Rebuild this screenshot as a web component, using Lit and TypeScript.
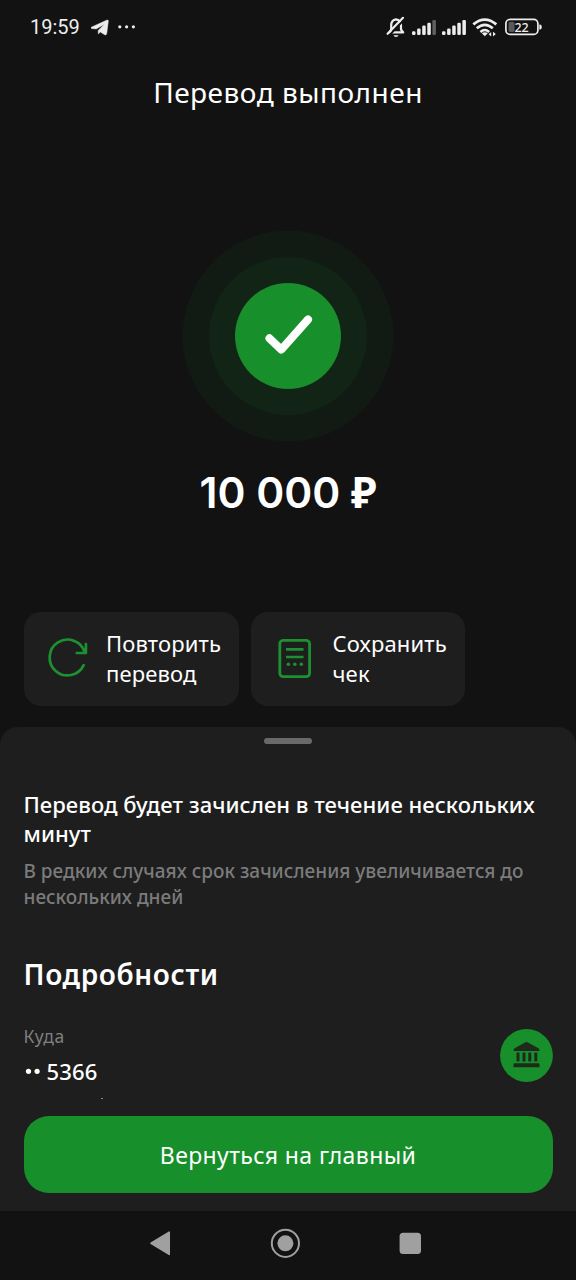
import { LitElement, html, css, svg } from "lit";
import { customElement } from "lit/decorators.js";

@customElement("status-bar")
class StatusBar extends LitElement {
  static styles = css`
    :host { display: flex; justify-content: space-between; height: 54px; padding: 0 33px 0 30px; box-sizing: border-box; align-items: center; color: #ededed; }
    .side { display: flex; align-items: center; height: 54px; }
    .time { font: 400 20px/55px Roboto, sans-serif; letter-spacing: 0; width: 61px; white-space: nowrap; }
    svg { display: block; }
  `;
  render() {
    const bars = (x: number, dim: boolean) =>
      [0, 1, 2, 3, 4].map(
        (i) => svg`<rect x=${x + i * 5.1} y=${31.2 - i * 2.8} width="3.5" height=${3.8 + i * 2.8} rx="1.2" fill=${dim && i === 4 ? "#606060" : "#ededed"}/>`
      );
    return html`
      <div class="side">
        <span class="time">19:59</span>
        <svg width="46" height="54" viewBox="91 0 46 54" fill="#ededed">
          <path d="M91.3 27.2 106.6 20.2Q108.7 19.5 108.3 21.4L106.7 33.8Q106.3 35.4 104.7 34.7L100.3 32 98.3 33.9 98.2 30.5 104.3 24.3 96.2 28.9 91.6 28.6Q90 28 91.3 27.2Z" stroke="#ededed" stroke-width=".5"/>
          <circle cx="119.8" cy="26.8" r="1.6"/><circle cx="126.6" cy="26.8" r="1.6"/><circle cx="133.4" cy="26.8" r="1.6"/>
        </svg>
      </div>
      <svg width="157" height="54" viewBox="386 0 157 54" fill="none" stroke="#ededed">
        <path d="M389.6 32.4H403.2L401 29.5V25.5Q401 20 396 19.3 391.2 20 391.2 25.5V29.4Z" stroke-width="2.2" stroke-linejoin="round"/>
        <path d="M393.5 35.2H398.5Q398 36.9 396 36.9 394 36.9 393.5 35.2Z" fill="#ededed" stroke="none"/>
        <path d="M390 34.6 404.6 19" stroke="#111" stroke-width="2"/>
        <path d="M387.6 33.8 403 17.8" stroke-width="2.2" stroke-linecap="round"/>
        <g stroke="none">${bars(412, true)}${bars(442, false)}</g>
        <g stroke-width="2.8">
          <path d="M473.3 24.4Q484.8 14.8 496.3 24.4"/>
          <path d="M476.8 28.3Q484.8 21.5 492.8 28.3"/>
          <path d="M480.4 32Q484.8 28 489.2 32" stroke-width="2.4"/>
        </g>
        <path d="M481.8 33.3Q484.8 31.4 487.8 33.3L484.8 36.3Z" fill="#ededed" stroke="none"/>
        <path d="M488.6 34.3 491.2 32V36.4ZM495.8 34 493 36.4V31.8Z" fill="#ededed" stroke="none"/>
        <rect x="505.9" y="19.4" width="32" height="15" rx="4.2" stroke-width="1.7"/>
        <rect x="508.5" y="21.8" width="6" height="10.2" rx="1.8" fill="#5a5a5a" stroke="none"/>
        <path d="M539.3 24.5H540.3Q541.8 25 541.8 27T540.3 29.5H539.3Z" fill="#ededed" stroke="none"/>
        <text x="521.6" y="31.6" text-anchor="middle" fill="#ededed" stroke="none" font-family="Noto Sans, sans-serif" font-size="12.5" font-weight="500">22</text>
      </svg>
    `;
  }
}

@customElement("action-card")
class ActionCard extends LitElement {
  static styles = css`
    :host { display: flex; align-items: center; height: 93.5px; box-sizing: border-box; border-radius: 17px; background: #1e1e1e; }
    ::slotted(svg) { display: block; flex: none; }
    .label { font: 400 22px/29.4px "Noto Sans", sans-serif; letter-spacing: 0.15px; color: #fff; white-space: nowrap; margin-left: -0.5px; }
  `;
  render() {
    return html`<slot name="icon"></slot><div class="label"><slot></slot></div>`;
  }
}

@customElement("app-root")
class AppRoot extends LitElement {
  static styles = css`
    :host { display: flex; flex-direction: column; width: 576px; height: 1280px; background: #121212; color: #fff; font-family: "Noto Sans", sans-serif; overflow: hidden; }
    svg { display: block; flex: none; }
    .title { font: 400 28px/76px "Noto Sans", sans-serif; height: 74px; text-align: center; letter-spacing: 0.5px; }
    .hero { display: flex; flex-direction: column; align-items: center; height: 484px; box-sizing: border-box; padding-top: 102px; }
    .amount { font: 600 42.5px/50px Inter, sans-serif; margin-top: 25px; white-space: nowrap; }
    .ruble { font: 700 42.5px/50px "Noto Sans", sans-serif; }
    .cards { display: flex; gap: 12px; padding-left: 23.5px; height: 114.5px; }
    .repeat { width: 215.5px; }
    .save { width: 214px; }
    .sheet { flex: none; height: 484.5px; background: #1e1e1e; border-radius: 18px 18px 0 0; display: flex; flex-direction: column; padding: 11.5px 23.5px 18px; box-sizing: border-box; }
    .handle { width: 48px; height: 6px; border-radius: 3px; background: #6a6a6a; align-self: center; }
    .lead { font-size: 22px; font-weight: 500; line-height: 29.5px; letter-spacing: 0.05px; margin-top: 46px; white-space: nowrap; }
    .note { font-size: 19px; font-weight: 500; line-height: 26px; margin-top: 9px; color: #7b7b7b; white-space: nowrap; }
    .heading { font-size: 28px; font-weight: 600; line-height: 38px; letter-spacing: 0.6px; margin-top: 45.5px; white-space: nowrap; }
    .row { display: flex; justify-content: space-between; margin-top: 36px; height: 87px; }
    .dest { display: flex; flex-direction: column; }
    .cap { font-size: 17.5px; line-height: 24px; letter-spacing: 0.5px; color: #7f7f7f; margin-top: -5px; }
    .account { display: flex; align-items: center; font-size: 22px; font-weight: 500; line-height: 30px; letter-spacing: 0.2px; margin-top: 8px; }
    .speck { width: 2px; height: 1px; background: #8a8a8a; margin: 11.5px 0 0 77.5px; }
    .main { flex: none; height: 77px; border-radius: 25px; background: #17902b; text-align: center; font-size: 23px; font-weight: 400; line-height: 78px; letter-spacing: 0.4px; white-space: nowrap; }
    .nav { flex: 1; display: flex; background: #121212; }
  `;
  render() {
    return html`
      <status-bar></status-bar>
      <div class="title">Перевод выполнен</div>
      <div class="hero">
        <svg width="212" height="212" viewBox="-106 -106 212 212">
          <circle r="105.5" fill="#121a14"/><circle r="79" fill="#122416"/><circle r="53" fill="#17902b"/>
          <path d="M-18.5 2.3-6.7 13.6 20-16.5" fill="none" stroke="#fff" stroke-width="8" stroke-linecap="round" stroke-linejoin="round"/>
        </svg>
        <div class="amount">10 000 <span class="ruble">₽</span></div>
      </div>
      <div class="cards">
        <action-card class="repeat">
          <svg slot="icon" width="83" height="94" viewBox="23.5 611 83 94" fill="none" stroke="#1c9130" stroke-width="2.7" stroke-linecap="round" stroke-linejoin="round">
            <path d="M83.2 664.2A17.9 17.9 0 1 1 84.2 651.4M85.4 643.1V652H76.3"/>
          </svg>
          Повторить<br>перевод
        </action-card>
        <action-card class="save">
          <svg slot="icon" width="82" height="94" viewBox="251 612 82 94" fill="none" stroke="#1c9130" stroke-width="2.8">
            <rect x="279.8" y="640.3" width="29.8" height="36.4" rx="3.5"/>
            <path d="M286 649.4H303.5M286 657H303.5" stroke-width="2.6"/>
            <g fill="#1c9130" stroke="none"><circle cx="288.4" cy="664.3" r="1.8"/><circle cx="294.8" cy="664.3" r="1.8"/><circle cx="301.3" cy="664.3" r="1.8"/></g>
          </svg>
          Сохранить<br>чек
        </action-card>
      </div>
      <div class="sheet">
        <div class="handle"></div>
        <div class="lead">Перевод будет зачислен в течение нескольких<br>минут</div>
        <div class="note">В редких случаях срок зачисления увеличивается до<br>нескольких дней</div>
        <div class="heading">Подробности</div>
        <div class="row">
          <div class="dest">
            <div class="cap">Куда</div>
            <div class="account">
              <svg width="23" height="30" viewBox="23.5 1057 23 30" fill="#fff"><circle cx="28" cy="1072.3" r="2.6"/><circle cx="36.6" cy="1072.3" r="2.6"/></svg>
              <span>5366</span>
            </div>
            <div class="speck"></div>
          </div>
          <svg width="53" height="53" viewBox="499.5 1029 53 53" fill="#1e2a1c">
            <circle cx="526" cy="1055.5" r="26.4" fill="#17902b"/>
            <path d="M526 1041.8 538 1048.2Q539 1048.8 539 1051H513Q513 1048.8 514 1048.2ZM516 1052.6H519V1061.6H516ZM522 1052.6H525V1061.6H522ZM527.8 1052.6H530.8V1061.6H527.8ZM533.8 1052.6H536.8V1061.6H533.8ZM514 1063.2H538Q539 1063.2 539 1064.4V1067.2H513V1064.4Q513 1063.2 514 1063.2Z"/>
          </svg>
        </div>
        <div class="main">Вернуться на главный</div>
      </div>
      <div class="nav">
        <svg width="576" height="69" viewBox="0 1211 576 69" fill="#a0a0a0">
          <path d="M151 1243.3 169.2 1232.2V1254.4Z" stroke="#a0a0a0" stroke-width="1.6" stroke-linejoin="round"/>
          <circle cx="285.4" cy="1243.3" r="13.6" fill="none" stroke="#a0a0a0" stroke-width="2"/><circle cx="285.4" cy="1243.3" r="8"/>
          <rect x="399.6" y="1232.8" width="21.4" height="21.2" rx="3.5"/>
        </svg>
      </div>
    `;
  }
}
